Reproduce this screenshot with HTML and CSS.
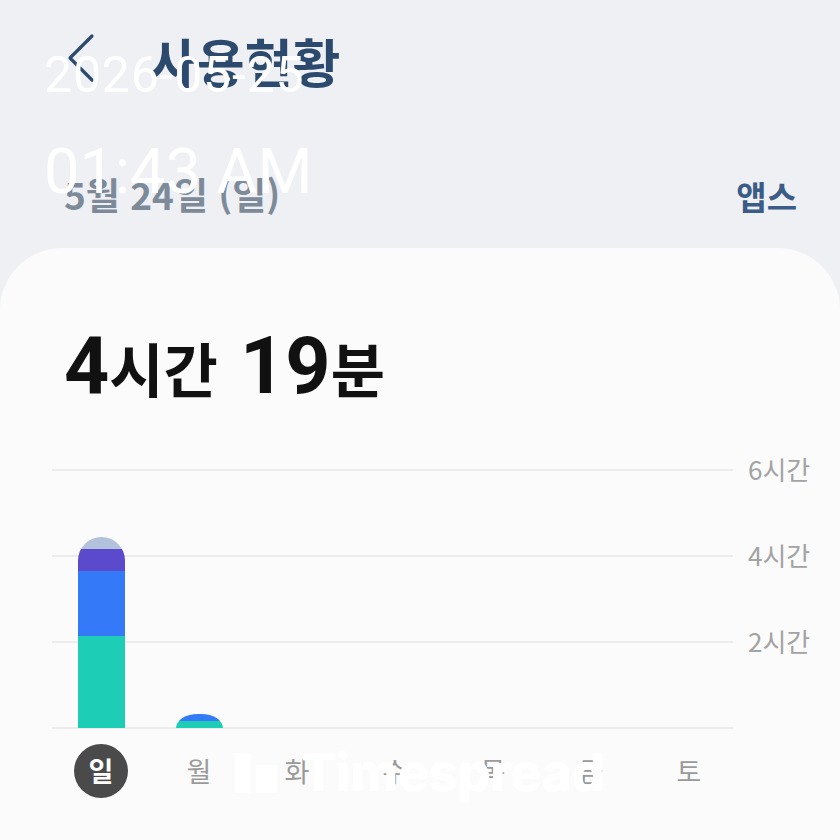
FILE: index.html
```html
<!DOCTYPE html>
<html lang="ko">
<head>
<meta charset="utf-8">
<link rel="stylesheet" href="styles.css">
</head>
<body>
<div class="screen">
  <header class="topbar">
    <svg class="back" width="40" height="60" viewBox="0 0 40 60">
      <polyline points="28,3 6,25 28,47" fill="none" stroke="#2b4a6e" stroke-width="3.2" stroke-linecap="round" stroke-linejoin="round"/>
    </svg>
    <h1 class="title">사용현황</h1>
  </header>
  <div class="daterow">
    <span class="date">5월 24일 (일)</span>
    <span class="apps">앱스</span>
  </div>
  <section class="card">
    <div class="total"><span class="num">4</span><span class="unit">시간</span> <span class="num">19</span><span class="unit">분</span></div>
    <div class="chart">
      <div class="plot">
        <div class="col"><div class="bar bar-sun">
          <div class="seg seg-lav" style="height:12px"></div>
          <div class="seg seg-pur" style="height:22px"></div>
          <div class="seg seg-blue" style="height:65px"></div>
          <div class="seg seg-teal" style="height:92px"></div>
        </div></div>
        <div class="col"><div class="bar bar-mon">
          <div class="seg seg-blue" style="height:7px"></div>
          <div class="seg seg-teal" style="height:7px"></div>
        </div></div>
        <div class="col"></div>
        <div class="col"></div>
        <div class="col"></div>
        <div class="col"></div>
        <div class="col"></div>
      </div>
      <div class="ylabels">
        <span>6시간</span>
        <span>4시간</span>
        <span>2시간</span>
      </div>
    </div>
    <div class="days">
      <span class="day day-active">일</span>
      <span class="day">월</span>
      <span class="day">화</span>
      <span class="day">수</span>
      <span class="day">목</span>
      <span class="day">금</span>
      <span class="day">토</span>
    </div>
  </section>

  <div class="stamp">
    <div class="stamp-date">2026-05-25</div>
    <div class="stamp-time">01:43 AM</div>
  </div>

  <div class="watermark">
    <svg class="wm-icon" width="44" height="42" viewBox="0 0 44 42">
      <rect x="0" y="0" width="15" height="40" fill="#ffffff"/>
      <rect x="21" y="12" width="21" height="28" fill="#ffffff"/>
    </svg>
    <span class="wm-text">Timespread</span>
  </div>
</div>
</body>
</html>
```

FILE: styles.css
```css
html, body {
  margin: 0;
  padding: 0;
  background: #eef0f3;
}

.screen {
  position: relative;
  width: 840px;
  height: 840px;
  overflow: hidden;
  background: #eef0f3;
  font-family: "Noto Sans CJK KR", sans-serif;
}

.topbar {
  display: flex;
  align-items: center;
  padding: 31px 0 0 64px;
  height: 60px;
}

.back {
  display: block;
  margin-top: 3px;
}

.title {
  margin: 0 0 0 45px;
  font-size: 52px;
  line-height: 52px;
  font-weight: 700;
  color: #2b4a6e;
}

.daterow {
  display: flex;
  justify-content: space-between;
  align-items: baseline;
  padding: 84px 43px 0 64px;
  line-height: 38px;
}

.date {
  font-size: 37px;
  font-weight: 700;
  color: #7d8a99;
}

.apps {
  font-size: 33px;
  font-weight: 700;
  color: #3a5c87;
}

.card {
  margin-top: 33px;
  height: 600px;
  background: #fbfbfb;
  border-radius: 62px 62px 0 0;
  padding: 73px 0 0 0;
  box-sizing: border-box;
}

.total {
  padding-left: 64px;
  line-height: 76px;
  height: 76px;
  font-size: 79px;
  color: #111111;
  font-weight: 700;
  white-space: pre;
}

.total .num {
  font-family: Roboto, sans-serif;
  font-size: 79px;
  font-weight: 700;
}

.total .unit {
  font-family: "Noto Sans CJK KR", sans-serif;
  font-size: 59px;
  font-weight: 700;
}

.chart {
  display: flex;
  margin-top: 72px;
  padding-left: 52px;
}

.plot {
  display: grid;
  grid-template-columns: repeat(7, 98px);
  width: 686px;
  height: 260px;
  background:
    linear-gradient(#ececec, #ececec) 0 0 / 681px 2px no-repeat,
    linear-gradient(#ececec, #ececec) 0 86px / 681px 2px no-repeat,
    linear-gradient(#ececec, #ececec) 0 172px / 681px 2px no-repeat,
    linear-gradient(#ececec, #ececec) 0 258px / 681px 2px no-repeat;
}

.col {
  display: flex;
  justify-content: center;
  align-items: flex-end;
  padding-bottom: 1px;
}

.bar {
  width: 47px;
  display: flex;
  flex-direction: column;
  overflow: hidden;
}

.bar-sun {
  border-radius: 24px 24px 0 0;
}

.bar-mon {
  border-radius: 22px 22px 0 0 / 14px 14px 0 0;
}

.seg-lav { background: #b3c2dc; }
.seg-pur { background: #5b4bcc; }
.seg-blue { background: #3479f7; }
.seg-teal { background: #1ecdb5; }

.ylabels {
  display: flex;
  flex-direction: column;
  margin: -15px 0 0 10px;
}

.ylabels span {
  height: 86px;
  line-height: 30px;
  font-size: 26px;
  color: #a3a3a3;
}

.days {
  display: grid;
  grid-template-columns: repeat(7, 98px);
  padding-left: 52px;
  margin-top: 15px;
}

.day {
  justify-self: center;
  width: 54px;
  height: 54px;
  line-height: 54px;
  text-align: center;
  font-size: 27px;
  color: #9a9a9a;
}

.day-active {
  background: #4a4a4a;
  color: #ffffff;
  border-radius: 50%;
  font-weight: 700;
}

.stamp {
  position: absolute;
  left: 44px;
  top: 50px;
  font-family: Roboto, sans-serif;
  color: #ffffff;
  font-weight: 400;
}

.stamp-date {
  font-size: 50px;
  line-height: 50px;
  letter-spacing: 0.8px;
}

.stamp-time {
  margin-top: 40px;
  font-size: 63px;
  line-height: 63px;
}

.watermark {
  position: absolute;
  left: 235px;
  top: 744px;
  display: flex;
  align-items: flex-end;
  gap: 22px;
}

.wm-icon {
  display: block;
  margin-bottom: 7px;
}

.wm-text {
  font-family: Inter, sans-serif;
  font-weight: 800;
  font-size: 52px;
  line-height: 58px;
  color: #ffffff;
  letter-spacing: -0.5px;
}
```
